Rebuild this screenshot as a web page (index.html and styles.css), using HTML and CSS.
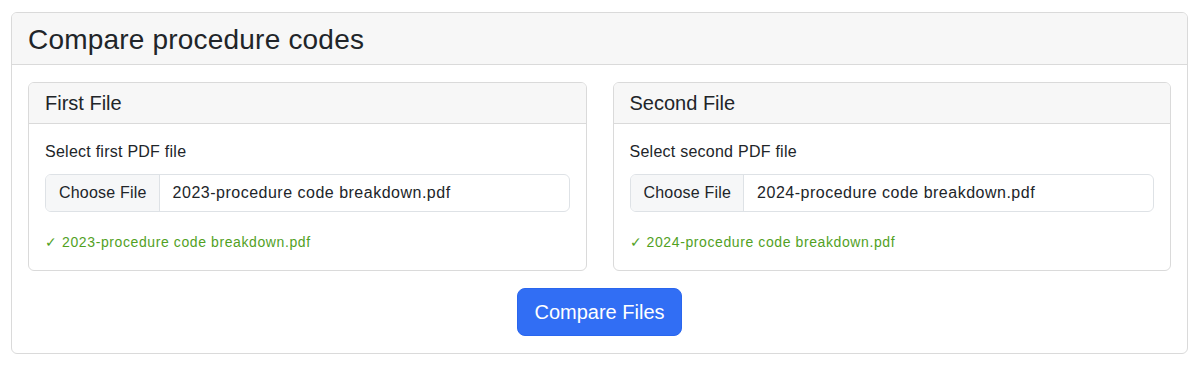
FILE: index.html
```html
<!DOCTYPE html>
<html lang="en">
<head>
<meta charset="utf-8">
<title>Compare procedure codes</title>
<link rel="stylesheet" href="styles.css">
</head>
<body>
<div class="page">
  <div class="card outer">
    <div class="card-header outer-header">
      <h3 class="title">Compare procedure codes</h3>
    </div>
    <div class="card-body outer-body">
      <div class="row">
        <div class="card inner">
          <div class="card-header inner-header">
            <h5 class="subtitle">First File</h5>
          </div>
          <div class="card-body inner-body">
            <label class="form-label">Select first PDF file</label>
            <div class="file-input">
              <span class="file-btn">Choose File</span>
              <span class="file-name">2023-procedure code breakdown.pdf</span>
            </div>
            <div class="success">✓ 2023-procedure code breakdown.pdf</div>
          </div>
        </div>
        <div class="card inner">
          <div class="card-header inner-header">
            <h5 class="subtitle">Second File</h5>
          </div>
          <div class="card-body inner-body">
            <label class="form-label">Select second PDF file</label>
            <div class="file-input">
              <span class="file-btn">Choose File</span>
              <span class="file-name">2024-procedure code breakdown.pdf</span>
            </div>
            <div class="success">✓ 2024-procedure code breakdown.pdf</div>
          </div>
        </div>
      </div>
      <div class="actions">
        <button class="btn-primary" type="button">Compare Files</button>
      </div>
    </div>
  </div>
</div>
</body>
</html>
```

FILE: styles.css
```css
* { box-sizing: border-box; }
html, body {
  margin: 0;
  padding: 0;
  background: #ffffff;
  font-family: "Liberation Sans", Arial, Helvetica, sans-serif;
  color: #212529;
  font-size: 16px;
  line-height: 1.5;
}
.page {
  padding: 12px 12px 0 11px;
}
.card {
  border: 1px solid #dadada;
  border-radius: 6px;
  background: #ffffff;
  overflow: hidden;
}
.outer { width: 1177px; }
.card-header {
  background: #f7f7f7;
  border-bottom: 1px solid #dadada;
  padding: 8px 16px;
}
.title {
  margin: 0;
  font-size: 28px;
  font-weight: 500;
  line-height: 1.2;
  height: 35px;
  padding-top: 2px;
  letter-spacing: 0.2px;
}
.outer-body {
  padding: 17px 16px 17px 16px;
}
.row {
  display: grid;
  grid-template-columns: 1fr 1fr;
  gap: 26px;
}
.subtitle {
  margin: 0;
  font-size: 20px;
  font-weight: 500;
  line-height: 1.2;
}
.inner-body {
  padding: 16px 16px 17px 16px;
}
.form-label {
  display: block;
  margin-bottom: 10px;
  font-size: 16px;
  line-height: 24px;
  letter-spacing: 0.25px;
}
.file-input {
  display: flex;
  align-items: center;
  height: 38px;
  border: 1px solid #dee2e6;
  border-radius: 6px;
  overflow: hidden;
  font-size: 16px;
}
.file-btn {
  display: flex;
  align-items: center;
  height: 100%;
  padding: 0 12px 0 13px;
  background: #f6f7f8;
  border-right: 1px solid #dee2e6;
  color: #212529;
  letter-spacing: 0.2px;
}
.file-name {
  padding-left: 13px;
  color: #212529;
  letter-spacing: 0.5px;
}
.success {
  margin-top: 20px;
  font-size: 14px;
  line-height: 21px;
  color: #52a11f;
  letter-spacing: 0.6px;
}
.actions {
  display: flex;
  justify-content: center;
  margin-top: 17px;
}
.btn-primary {
  font-family: inherit;
  font-size: 20px;
  line-height: 30px;
  padding: 8px 16px;
  height: 48px;
  color: #ffffff;
  background: #316ef4;
  border: 1px solid #2a66ee;
  border-radius: 8px;
  cursor: pointer;
}
```
